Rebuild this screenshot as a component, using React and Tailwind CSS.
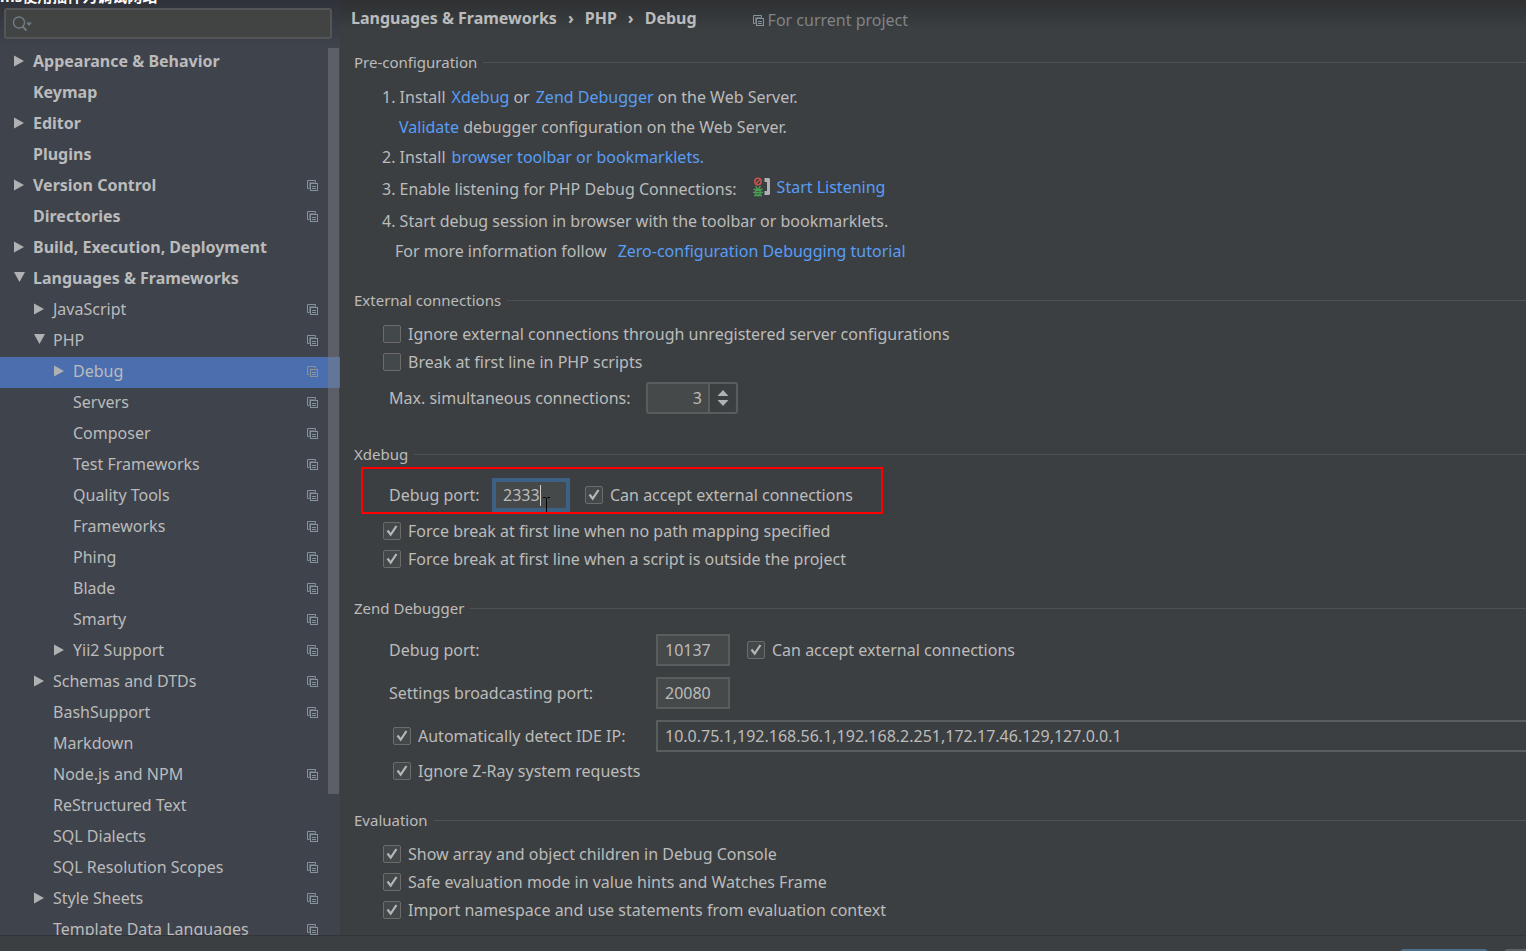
import React from "react";

const TREE = [
  { label: "Appearance & Behavior", level: 0, arrow: "right" },
  { label: "Keymap", level: 0 },
  { label: "Editor", level: 0, arrow: "right" },
  { label: "Plugins", level: 0 },
  { label: "Version Control", level: 0, arrow: "right", project: true },
  { label: "Directories", level: 0, project: true },
  { label: "Build, Execution, Deployment", level: 0, arrow: "right" },
  { label: "Languages & Frameworks", level: 0, arrow: "down" },
  { label: "JavaScript", level: 1, arrow: "right", project: true },
  { label: "PHP", level: 1, arrow: "down", project: true },
  { label: "Debug", level: 2, arrow: "right", project: true, selected: true },
  { label: "Servers", level: 2, project: true },
  { label: "Composer", level: 2, project: true },
  { label: "Test Frameworks", level: 2, project: true },
  { label: "Quality Tools", level: 2, project: true },
  { label: "Frameworks", level: 2, project: true },
  { label: "Phing", level: 2, project: true },
  { label: "Blade", level: 2, project: true },
  { label: "Smarty", level: 2, project: true },
  { label: "Yii2 Support", level: 2, arrow: "right", project: true },
  { label: "Schemas and DTDs", level: 1, arrow: "right", project: true },
  { label: "BashSupport", level: 1, project: true },
  { label: "Markdown", level: 1 },
  { label: "Node.js and NPM", level: 1, project: true },
  { label: "ReStructured Text", level: 1 },
  { label: "SQL Dialects", level: 1, project: true },
  { label: "SQL Resolution Scopes", level: 1, project: true },
  { label: "Style Sheets", level: 1, arrow: "right", project: true },
  { label: "Template Data Languages", level: 1, project: true },
];

const INDENT = ["pl-[13px]", "pl-[33px]", "pl-[53px]"];

function ProjectIcon() {
  return (
    <svg className="size-[11px] shrink-0" viewBox="0 0 11 11" fill="none" stroke="#87939a" aria-hidden="true">
      <path d="M2 8.500H.5v-8h8V2" />
      <path d="M2.500 9V2.500H9" stroke="#666f76" />
      <rect x="3.500" y="3.500" width="7" height="7" />
      <path d="M5 6.500h4M5 8.500h4" />
    </svg>
  );
}

function Arrow({ kind }) {
  return (
    <svg className="h-[12px] w-[12px] shrink-0" viewBox="0 0 12 12" fill="#afb1b3" aria-hidden="true">
      {kind === "right" && <path d="M1 .5v11L11 6z" />}
      {kind === "down" && <path d="M1 0h11L6.500 10z" />}
    </svg>
  );
}

function TreeRow({ item }) {
  return (
    <li>
      <button
        type="button"
        className={`flex h-[31px] w-full items-center gap-2 pr-[22px] pb-[3px] text-left whitespace-nowrap ${INDENT[item.level]} ${
          item.level === 0 ? "font-bold" : ""
        } ${item.selected ? "bg-[#4b6eaf]" : ""}`}
      >
        <Arrow kind={item.arrow} />
        <span className="flex-1">{item.label}</span>
        {item.project && <ProjectIcon />}
      </button>
    </li>
  );
}

function Sidebar() {
  return (
    <aside className="flex w-[340px] shrink-0 flex-col bg-[#3f434c]">
      <div className="relative h-[47px] shrink-0 bg-linear-to-b from-[#2f3238] to-[#3f434c] px-1 pt-2">
        <span className="absolute bottom-[43px] left-0 text-[15px] leading-[16px] font-bold whitespace-nowrap text-white">
          ms使用插件为调试网站
        </span>
        <div className="mr-1 flex h-[31px] items-center rounded-[3px] border-2 border-[#535658] bg-[#424444] px-[6px]">
          <svg className="h-4 w-[22px] shrink-0" viewBox="0 0 22 16" fill="none" aria-hidden="true">
            <circle cx="7" cy="6.500" r="5.500" stroke="#6f7c84" strokeWidth="1.400" />
            <path d="M10.500 10.500L14.500 14.500" stroke="#6f7c84" strokeWidth="2" />
            <path d="M14 6.500h6l-3 3.500z" fill="#6f7c84" />
          </svg>
          <input type="text" aria-label="Search settings" className="min-w-0 flex-1 bg-transparent outline-none" />
        </div>
      </div>
      <div className="relative min-h-0 flex-1 overflow-hidden">
        <ul>
          {TREE.map((item) => (
            <TreeRow key={item.label} item={item} />
          ))}
        </ul>
        <div className="absolute top-px right-px h-[746px] w-[11px] bg-[#7b7c84]/50" />
      </div>
    </aside>
  );
}

function Section({ title, children }) {
  return (
    <section>
      <div className="flex h-6 items-center gap-[6px] pl-[14px]">
        <h2 className="text-[15px]">{title}</h2>
        <div className="h-px flex-1 bg-[#515151]" />
      </div>
      {children}
    </section>
  );
}

function Check({ label, checked }) {
  return (
    <label className="flex h-7 items-center gap-[7px] whitespace-nowrap">
      <span className="grid size-[18px] place-items-center">
        <input
          type="checkbox"
          defaultChecked={checked}
          className="peer col-start-1 row-start-1 size-[18px] appearance-none rounded-[2px] border border-[#6b6b6b] bg-[#43494a]"
        />
        <svg
          className="pointer-events-none invisible col-start-1 row-start-1 size-[18px] peer-checked:visible"
          viewBox="0 0 18 18"
          fill="none"
          stroke="#b4b6b8"
          strokeWidth="2.200"
          aria-hidden="true"
        >
          <path d="M4.500 8.500l3.200 4.200L13.500 4" />
        </svg>
      </span>
      {label}
    </label>
  );
}

function Link({ children }) {
  return (
    <a href="#" className="text-[#589df6]">
      {children}
    </a>
  );
}

function ListenIcon() {
  return (
    <svg className="h-5 w-[18px] shrink-0" viewBox="0 0 18 20" fill="none" aria-hidden="true">
      <circle cx="5" cy="4.500" r="3.200" stroke="#c75450" strokeWidth="1.500" />
      <path d="M3 6.500l4-4" stroke="#c75450" strokeWidth="1.200" />
      <ellipse cx="5" cy="15" rx="3" ry="4" fill="#499c54" />
      <path d="M.5 12.500h9M0 15.500h10M1 18.500h8M2.500 9l1.500 2M7.500 9L6 11" stroke="#499c54" strokeWidth="1.300" />
      <path d="M3.500 14.500h3M3.500 16.700h3" stroke="#3c3f41" strokeWidth=".800" />
      <path d="M11.500 1H16l1 1v15l-1 1h-4.500v-4H14V5h-2.500z" fill="#afb1b3" />
    </svg>
  );
}

const FIELD = "border-2 border-[#5a5d5e] text-[#bbbbbb] outline-none";

function Main() {
  return (
    <main className="min-w-0 flex-1 overflow-hidden whitespace-nowrap">
      <header className="flex h-[50px] items-start bg-linear-to-b from-[#2e3032] to-[#3c3f41] to-60% pt-[6px] pl-[11px]">
        <nav aria-label="Breadcrumb" className="flex h-6 items-center gap-[11px] font-bold">
          <span>Languages &amp; Frameworks</span>
          <span>›</span>
          <span>PHP</span>
          <span>›</span>
          <span>Debug</span>
        </nav>
        <div className="mt-[2px] ml-[56px] flex h-6 items-center gap-1 text-[#808386]">
          <ProjectIcon />
          For current project
        </div>
      </header>

      <div className="flex flex-col gap-[22px]">
        <Section title="Pre-configuration">
          <ol className="pt-2 pl-[42px]">
            <li className="flex h-[60px] flex-col">
              <div className="flex h-[30px] items-center gap-1">
                <span className="mr-[2px]">1. Install</span>
                <Link>Xdebug</Link>
                <span className="mr-[2px]">or</span>
                <Link>Zend Debugger</Link>
                <span>on the Web Server.</span>
              </div>
              <div className="flex h-[30px] items-center gap-1 pl-[17px]">
                <Link>Validate</Link>
                <span>debugger configuration on the Web Server.</span>
              </div>
            </li>
            <li className="flex h-[30px] items-center gap-[6px]">
              <span>2. Install</span>
              <Link>browser toolbar or bookmarklets.</Link>
            </li>
            <li className="flex h-[34px] items-center gap-4">
              <span>3. Enable listening for PHP Debug Connections:</span>
              <button type="button" className="flex items-center gap-[6px] pb-1 text-[#589df6]">
                <ListenIcon />
                Start Listening
              </button>
            </li>
            <li className="h-[60px]">
              <div className="flex h-[30px] items-center">
                4. Start debug session in browser with the toolbar or bookmarklets.
              </div>
              <div className="flex h-[30px] items-center gap-[11px] pl-[13px]">
                <span>For more information follow</span>
                <Link>Zero-configuration Debugging tutorial</Link>
              </div>
            </li>
          </ol>
        </Section>

        <Section title="External connections">
          <div className="pt-2 pl-[43px]">
            <Check label="Ignore external connections through unregistered server configurations" />
            <Check label="Break at first line in PHP scripts" />
            <div className="flex h-11 items-center pl-[6px]">
              <label htmlFor="max-connections" className="w-[257px]">
                Max. simultaneous connections:
              </label>
              <div className="flex h-8 w-[92px] rounded-[3px] border-2 border-[#5a5d5e]">
                <input
                  id="max-connections"
                  type="text"
                  defaultValue="3"
                  className="w-[62px] border-r-2 border-[#5a5d5e] bg-[#45494a] pr-[6px] text-right outline-none"
                />
                <div className="flex flex-1 flex-col items-center justify-center gap-1">
                  <button type="button" aria-label="Increase">
                    <svg className="h-[6px] w-3" viewBox="0 0 12 6" fill="#afb1b3">
                      <path d="M6 0l5.500 6H.5z" />
                    </svg>
                  </button>
                  <button type="button" aria-label="Decrease">
                    <svg className="h-[6px] w-3" viewBox="0 0 12 6" fill="#afb1b3">
                      <path d="M6 6l5.500-6H.5z" />
                    </svg>
                  </button>
                </div>
              </div>
            </div>
          </div>
        </Section>

        <Section title="Xdebug">
          <div className="mt-px ml-[21px] flex h-[47px] w-[522px] items-center border-2 border-[#ff0000] pt-2 pl-[26px]">
            <label htmlFor="xdebug-port" className="w-[103px]">
              Debug port:
            </label>
            <div className="relative mr-[15px]">
              <input
                id="xdebug-port"
                type="text"
                defaultValue="2333"
                className="h-[34px] w-[78px] border-4 border-[#3d6185] bg-[#45494a] pl-[7px] text-[#bbbbbb] outline-none"
              />
              <div className="absolute top-[7px] left-[48px] h-[21px] w-px bg-[#d0d0d0]" />
              <svg className="absolute top-[19px] left-[51px] h-[15px] w-[7px]" viewBox="0 0 7 15" stroke="#000" fill="none" aria-hidden="true">
                <path d="M0 .5h2.500l1 1 1-1H7M3.500 1v14" />
              </svg>
            </div>
            <Check label="Can accept external connections" checked />
          </div>
          <div className="pt-[3px] pb-px pl-[43px]">
            <Check label="Force break at first line when no path mapping specified" checked />
            <Check label="Force break at first line when a script is outside the project" checked />
          </div>
        </Section>

        <Section title="Zend Debugger">
          <div className="pt-2 pb-px pl-[49px]">
            <div className="grid grid-cols-[267px_1fr] auto-rows-[43px] items-center">
              <label htmlFor="zend-port">Debug port:</label>
              <div className="flex items-center gap-[17px]">
                <input id="zend-port" type="text" defaultValue="10137" className={`h-8 w-[74px] bg-[#45494a] pl-[7px] ${FIELD}`} />
                <Check label="Can accept external connections" checked />
              </div>
              <label htmlFor="broadcast-port">Settings broadcasting port:</label>
              <input id="broadcast-port" type="text" defaultValue="20080" className={`h-8 w-[74px] bg-[#45494a] pl-[7px] ${FIELD}`} />
              <div className="pl-1">
                <Check label="Automatically detect IDE IP:" checked />
              </div>
              <input
                type="text"
                aria-label="IDE IP"
                defaultValue="10.0.75.1,192.168.56.1,192.168.2.251,172.17.46.129,127.0.0.1"
                className={`h-8 w-full border-r-0 bg-transparent pl-[7px] ${FIELD}`}
              />
            </div>
            <div className="pl-1">
              <Check label="Ignore Z-Ray system requests" checked />
            </div>
          </div>
        </Section>

        <Section title="Evaluation">
          <div className="pt-2 pl-[43px]">
            <Check label="Show array and object children in Debug Console" checked />
            <Check label="Safe evaluation mode in value hints and Watches Frame" checked />
            <Check label="Import namespace and use statements from evaluation context" checked />
          </div>
        </Section>
      </div>
    </main>
  );
}

export default function App() {
  return (
    <div className="flex h-screen flex-col overflow-hidden bg-[#3c3f41] font-['Noto_Sans','Noto_Sans_CJK_SC',sans-serif] text-[16px] leading-[22px] text-[#bbbbbb]">
      <div className="flex min-h-0 flex-1">
        <Sidebar />
        <Main />
      </div>
      <footer className="flex h-4 shrink-0 justify-end gap-4 overflow-hidden border-t border-[#323537] pt-[13px]">
        <button type="button" aria-label="OK" className="h-8 w-[88px] rounded-[4px] border-2 border-[#4c708c] bg-[#365880]" />
        <button type="button" aria-label="Cancel" className="h-8 w-[22px] rounded-l-[4px] border-2 border-r-0 border-[#5e6163] bg-[#4c5052]" />
      </footer>
    </div>
  );
}
